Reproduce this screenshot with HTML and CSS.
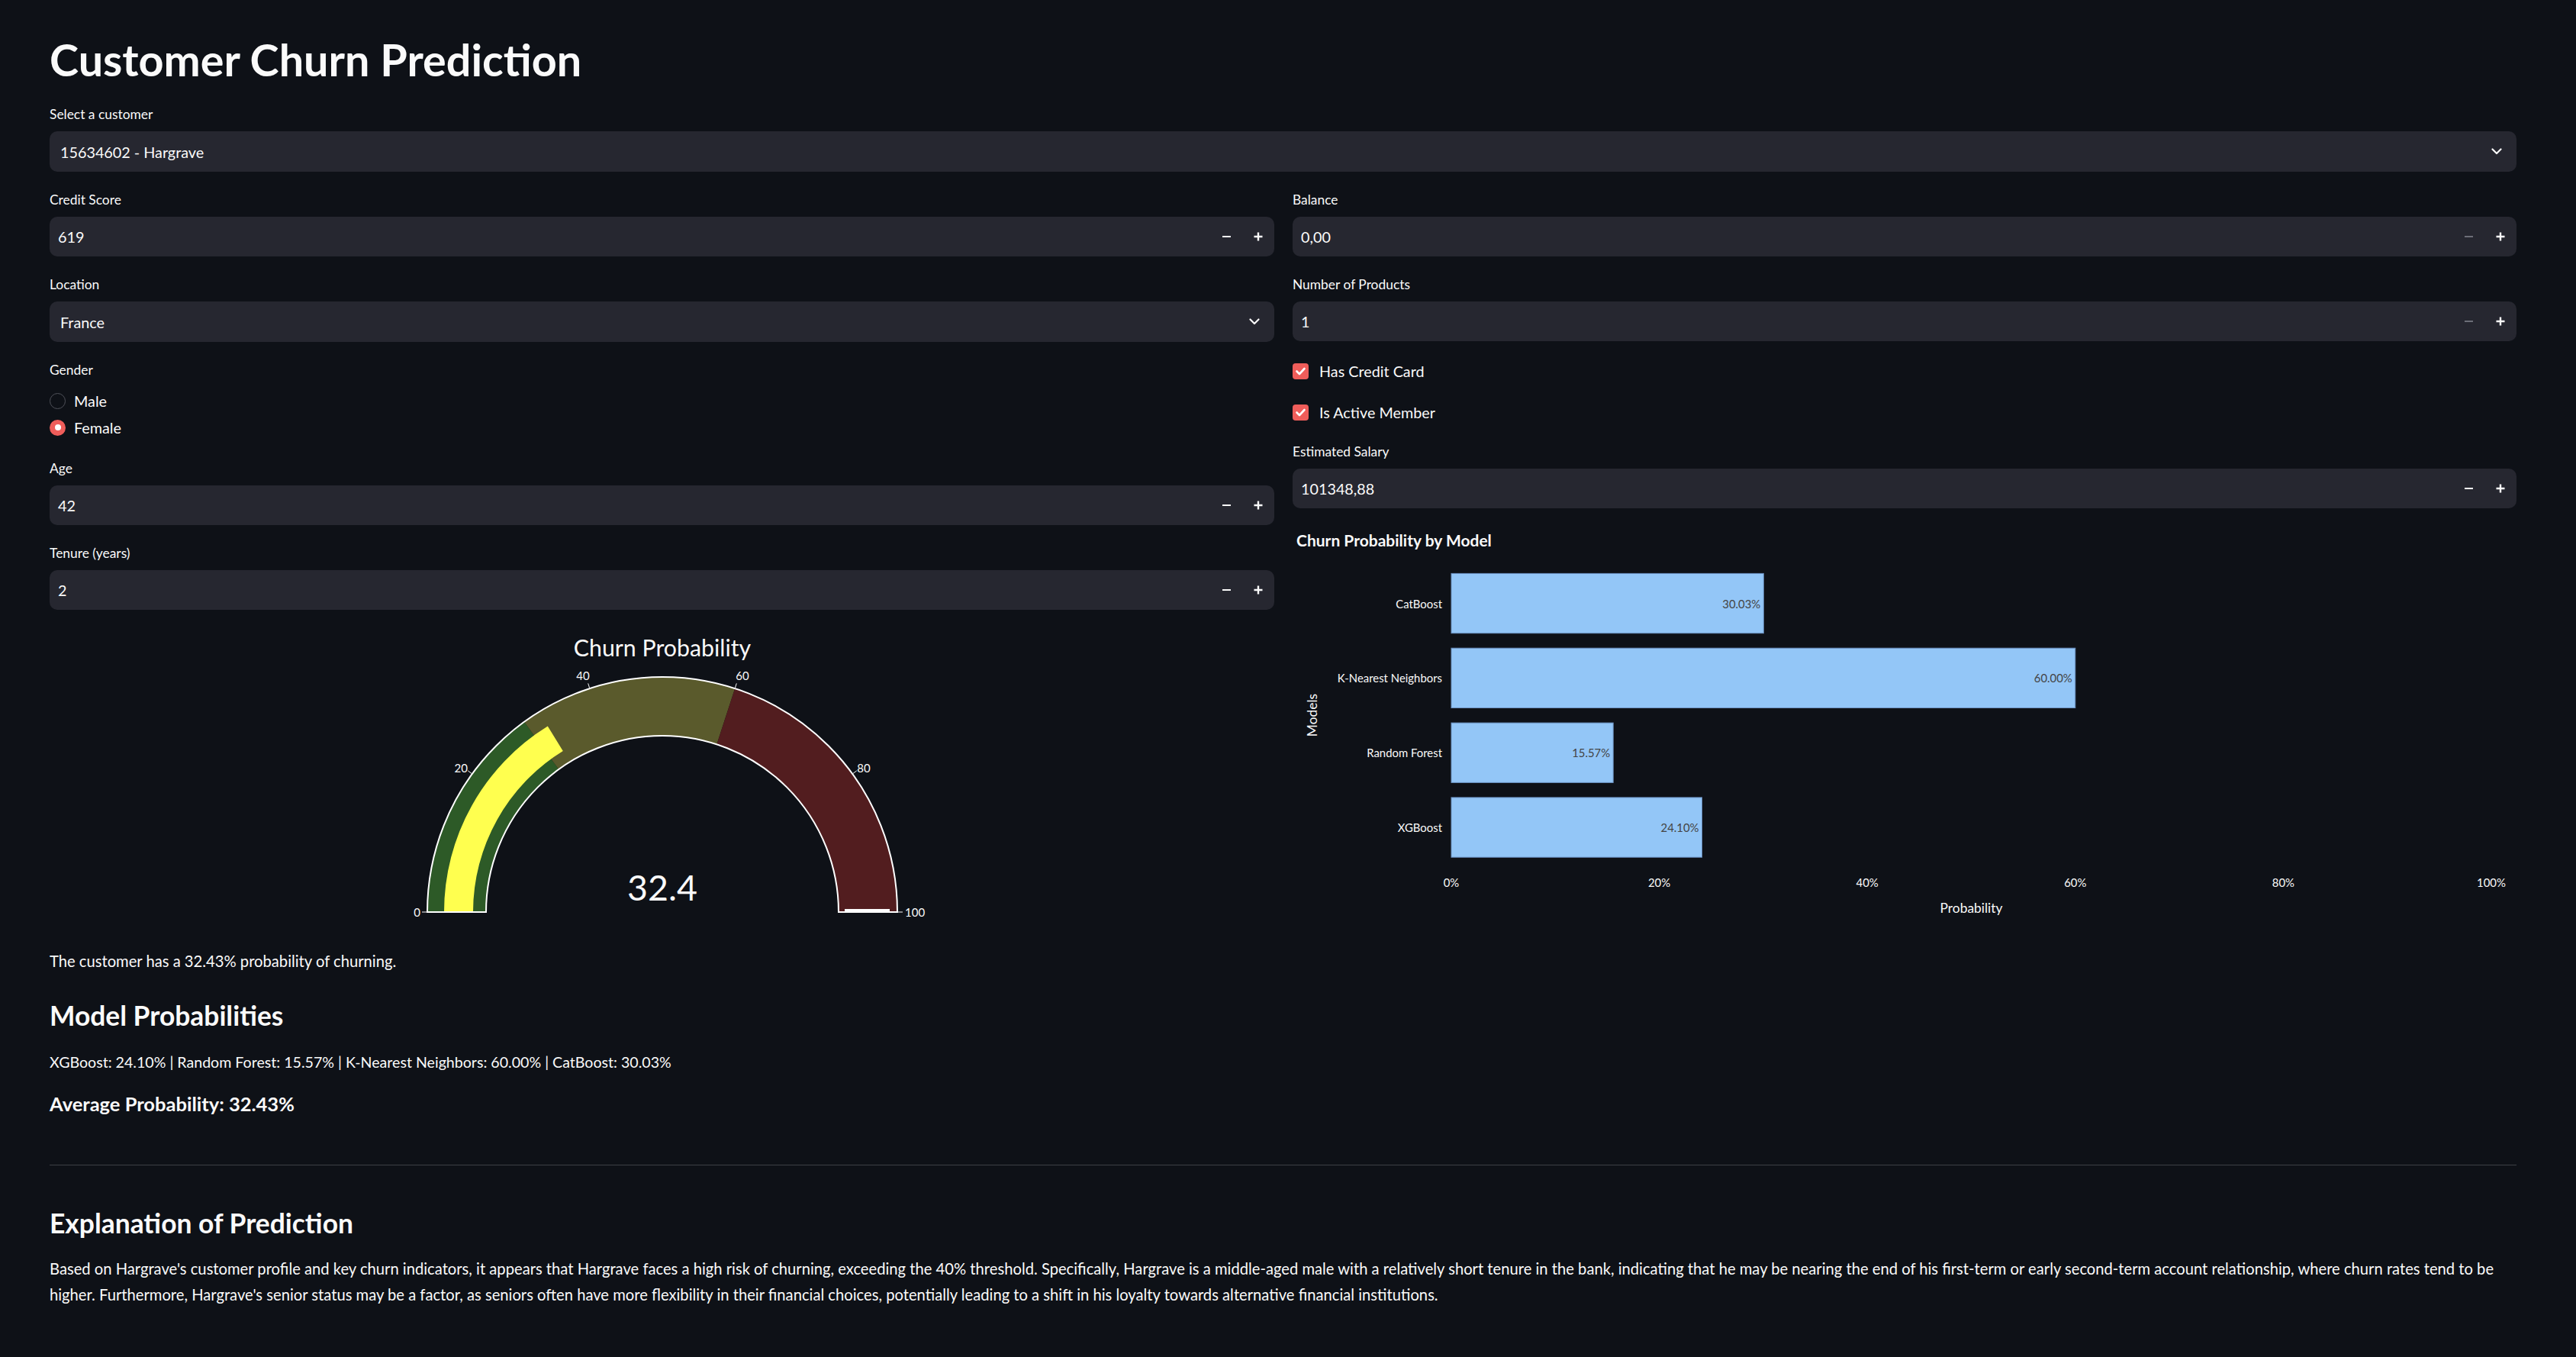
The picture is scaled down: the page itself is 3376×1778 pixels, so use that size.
FILE: index.html
```html
<!DOCTYPE html>
<html lang="en">
<head>
<meta charset="utf-8">
<title>Customer Churn Prediction</title>
<link rel="stylesheet" href="styles.css">
</head>
<body>
<main class="app">
  <h1 class="title">Customer Churn Prediction</h1>

  <div class="widget">
    <div class="label">Select a customer</div>
    <div class="select">
      <span>15634602 - Hargrave</span>
      <svg class="chevron" viewBox="0 0 14 9" width="14" height="9"><polyline points="1.5,1.5 7,7 12.5,1.5"/></svg>
    </div>
  </div>

  <div class="cols">
    <div class="col">
      <div class="widget">
        <div class="label">Credit Score</div>
        <div class="number">
          <span class="value">619</span>
          <span class="step"><span class="minus"></span></span>
          <span class="step"><svg class="plus" viewBox="0 0 12 12" width="12" height="12"><path d="M6 0.5V11.5M0.5 6H11.5"/></svg></span>
        </div>
      </div>
      <div class="widget">
        <div class="label">Location</div>
        <div class="select">
          <span>France</span>
          <svg class="chevron" viewBox="0 0 14 9" width="14" height="9"><polyline points="1.5,1.5 7,7 12.5,1.5"/></svg>
        </div>
      </div>
      <div class="widget">
        <div class="label">Gender</div>
        <div class="radio-group">
          <div class="radio-row"><span class="radio"></span><span>Male</span></div>
          <div class="radio-row"><span class="radio on"></span><span>Female</span></div>
        </div>
      </div>
      <div class="widget">
        <div class="label">Age</div>
        <div class="number">
          <span class="value">42</span>
          <span class="step"><span class="minus"></span></span>
          <span class="step"><svg class="plus" viewBox="0 0 12 12" width="12" height="12"><path d="M6 0.5V11.5M0.5 6H11.5"/></svg></span>
        </div>
      </div>
      <div class="widget">
        <div class="label">Tenure (years)</div>
        <div class="number">
          <span class="value">2</span>
          <span class="step"><span class="minus"></span></span>
          <span class="step"><svg class="plus" viewBox="0 0 12 12" width="12" height="12"><path d="M6 0.5V11.5M0.5 6H11.5"/></svg></span>
        </div>
      </div>

      <svg class="gauge" viewBox="0 0 1605 395" width="1605" height="395">
        <g transform="translate(803,372)">
          <text class="gauge-title" x="0" y="-335" text-anchor="middle">Churn Probability</text>
          <path fill="#2d5a27" d="M -308 0 A 308 308 0 0 1 -181.0 -249.2 L -135.8 -186.9 A 231 231 0 0 0 -231 0 Z"/>
          <path fill="#5a5a2c" d="M -181.0 -249.2 A 308 308 0 0 1 95.2 -292.9 L 71.4 -219.7 A 231 231 0 0 0 -135.8 -186.9 Z"/>
          <path fill="#521d1f" d="M 95.2 -292.9 A 308 308 0 0 1 308 0 L 231 0 A 231 231 0 0 0 71.4 -219.7 Z"/>
          <path fill="#ffff4f" d="M -286 0 A 286 286 0 0 1 -150.2 -243.4 L -130.2 -211.0 A 248 248 0 0 0 -248 0 Z"/>
          <path fill="none" stroke="#ffffff" stroke-width="2" d="M -308 0 A 308 308 0 0 1 308 0 L 231 0 A 231 231 0 0 0 -231 0 Z"/>
          <line x1="239" y1="-2" x2="298" y2="-2" stroke="#ffffff" stroke-width="4"/>
          <g stroke="#fafafa" stroke-width="1">
            <line x1="-309" y1="0" x2="-315" y2="0"/>
            <line x1="-250.0" y1="-181.6" x2="-254.8" y2="-185.2"/>
            <line x1="-95.5" y1="-293.9" x2="-97.3" y2="-299.6"/>
            <line x1="95.5" y1="-293.9" x2="97.3" y2="-299.6"/>
            <line x1="250.0" y1="-181.6" x2="254.8" y2="-185.2"/>
            <line x1="309" y1="0" x2="315" y2="0"/>
          </g>
          <g class="gauge-tick">
            <text x="-317" y="0" text-anchor="end" dominant-baseline="central">0</text>
            <text x="-263.7" y="-189" text-anchor="middle" dominant-baseline="central">20</text>
            <text x="-104" y="-310" text-anchor="middle" dominant-baseline="central">40</text>
            <text x="105" y="-310" text-anchor="middle" dominant-baseline="central">60</text>
            <text x="264" y="-189" text-anchor="middle" dominant-baseline="central">80</text>
            <text x="318" y="0" text-anchor="start" dominant-baseline="central">100</text>
          </g>
          <text class="gauge-value" x="0" y="-15" text-anchor="middle">32.4</text>
        </g>
      </svg>
    </div>

    <div class="col">
      <div class="widget">
        <div class="label">Balance</div>
        <div class="number">
          <span class="value">0,00</span>
          <span class="step"><span class="minus off"></span></span>
          <span class="step"><svg class="plus" viewBox="0 0 12 12" width="12" height="12"><path d="M6 0.5V11.5M0.5 6H11.5"/></svg></span>
        </div>
      </div>
      <div class="widget">
        <div class="label">Number of Products</div>
        <div class="number">
          <span class="value">1</span>
          <span class="step"><span class="minus off"></span></span>
          <span class="step"><svg class="plus" viewBox="0 0 12 12" width="12" height="12"><path d="M6 0.5V11.5M0.5 6H11.5"/></svg></span>
        </div>
      </div>
      <div class="check-row">
        <span class="checkbox"><svg viewBox="0 0 21 21" width="21" height="21"><polyline points="5.5,10.5 9,14 15.5,7"/></svg></span>
        <span>Has Credit Card</span>
      </div>
      <div class="check-row">
        <span class="checkbox"><svg viewBox="0 0 21 21" width="21" height="21"><polyline points="5.5,10.5 9,14 15.5,7"/></svg></span>
        <span>Is Active Member</span>
      </div>
      <div class="widget">
        <div class="label">Estimated Salary</div>
        <div class="number">
          <span class="value">101348,88</span>
          <span class="step"><span class="minus"></span></span>
          <span class="step"><svg class="plus" viewBox="0 0 12 12" width="12" height="12"><path d="M6 0.5V11.5M0.5 6H11.5"/></svg></span>
        </div>
      </div>

      <svg class="bar-chart" viewBox="0 0 1604 527" width="1604" height="527">
        <text class="chart-title" x="5" y="25.7">Churn Probability by Model</text>
        <g class="bars">
          <rect x="208" y="61.4" width="409.3" height="78.3"/>
          <rect x="208" y="159.2" width="817.8" height="78.3"/>
          <rect x="208" y="257.1" width="212.2" height="78.3"/>
          <rect x="208" y="354.9" width="328.5" height="78.3"/>
        </g>
        <g class="bar-values" text-anchor="end" dominant-baseline="central">
          <text x="613.3" y="100.5">30.03%</text>
          <text x="1021.8" y="198.4">60.00%</text>
          <text x="416.2" y="296.2">15.57%</text>
          <text x="532.5" y="394.0">24.10%</text>
        </g>
        <g class="axis-text" text-anchor="end" dominant-baseline="central">
          <text x="196" y="100.5">CatBoost</text>
          <text x="196" y="198.4">K-Nearest Neighbors</text>
          <text x="196" y="296.2">Random Forest</text>
          <text x="196" y="394.0">XGBoost</text>
        </g>
        <g class="axis-text" text-anchor="middle" dominant-baseline="central">
          <text x="208" y="466">0%</text>
          <text x="480.6" y="466">20%</text>
          <text x="753.2" y="466">40%</text>
          <text x="1025.8" y="466">60%</text>
          <text x="1298.4" y="466">80%</text>
          <text x="1571" y="466">100%</text>
        </g>
        <text class="axis-title" x="889.5" y="499" text-anchor="middle" dominant-baseline="central">Probability</text>
        <text class="axis-title" x="25" y="247" text-anchor="middle" dominant-baseline="central" transform="rotate(-90 25 247)">Models</text>
      </svg>
    </div>
  </div>

  <p class="text first">The customer has a 32.43% probability of churning.</p>
  <h3 class="h3">Model Probabilities</h3>
  <p class="text probs">XGBoost: 24.10% | Random Forest: 15.57% | K-Nearest Neighbors: 60.00% | CatBoost: 30.03%</p>
  <h4 class="h4">Average Probability: 32.43%</h4>
  <hr class="divider">
  <h3 class="h3 explain-title">Explanation of Prediction</h3>
  <p class="text explain">Based on Hargrave's customer profile and key churn indicators, it appears that Hargrave faces a high risk of churning, exceeding the 40% threshold. Specifically, Hargrave is a middle-aged male with a relatively short tenure in the bank, indicating that he may be nearing the end of his first-term or early second-term account relationship, where churn rates tend to be higher. Furthermore, Hargrave's senior status may be a factor, as seniors often have more flexibility in their financial choices, potentially leading to a shift in his loyalty towards alternative financial institutions.</p>
</main>
</body>
</html>
```

FILE: styles.css
```css
html, body {
  margin: 0;
  padding: 0;
  background: #0e1117;
}

body {
  color: #fafafa;
  font-family: Lato, "Noto Sans", sans-serif;
}

.app {
  width: 3233px;
  padding: 44px 0 60px 65px;
}

.title {
  margin: 0 0 25px;
  font-size: 57.5px;
  line-height: 68px;
  font-weight: 700;
}

.widget {
  display: flex;
  flex-direction: column;
}

.label {
  height: 26px;
  margin-bottom: 9px;
  font-size: 17.4px;
  line-height: 26px;
}

.select {
  height: 53px;
  box-sizing: border-box;
  padding: 0 19px 0 14px;
  display: flex;
  align-items: center;
  justify-content: space-between;
  background: #262730;
  border-radius: 10px;
  font-size: 19.8px;
}

.chevron polyline {
  fill: none;
  stroke: #fafafa;
  stroke-width: 2.2;
  stroke-linecap: round;
  stroke-linejoin: round;
}

.number {
  height: 52px;
  box-sizing: border-box;
  padding-left: 11px;
  display: flex;
  align-items: center;
  background: #262730;
  border-radius: 10px;
  font-size: 19.8px;
}

.number .value {
  flex: 1;
}

.step {
  width: 42px;
  height: 100%;
  display: flex;
  align-items: center;
  justify-content: center;
}

.minus {
  width: 11px;
  height: 2px;
  background: #fafafa;
}

.minus.off {
  background: #6c6e78;
}

.plus path {
  stroke: #fafafa;
  stroke-width: 2.4;
  fill: none;
}

.cols {
  margin-top: 24px;
  display: grid;
  grid-template-columns: 1fr 1fr;
  column-gap: 24px;
}

.col {
  display: flex;
  flex-direction: column;
  gap: 24px;
}

.radio-group {
  padding-top: 1px;
  display: flex;
  flex-direction: column;
  gap: 1px;
}

.radio-row {
  height: 34px;
  display: flex;
  align-items: center;
  gap: 11px;
  font-size: 19.8px;
}

.radio {
  width: 21px;
  height: 21px;
  box-sizing: border-box;
  border-radius: 50%;
  border: 1px solid #50525a;
  background: #0e1117;
  display: flex;
  align-items: center;
  justify-content: center;
}

.radio.on {
  border: none;
  background: #ef5d5a;
}

.radio.on::after {
  content: "";
  width: 8px;
  height: 8px;
  border-radius: 50%;
  background: #ffffff;
}

.check-row {
  height: 30px;
  display: flex;
  align-items: center;
  gap: 14px;
  font-size: 19.8px;
}

.checkbox {
  width: 21px;
  height: 21px;
  border-radius: 4px;
  background: #ef5d5a;
  display: flex;
}

.checkbox polyline {
  fill: none;
  stroke: #ffffff;
  stroke-width: 2.6;
  stroke-linecap: round;
  stroke-linejoin: round;
}

.gauge,
.bar-chart {
  display: block;
  font-family: Lato, "Noto Sans", sans-serif;
}

.gauge-title {
  fill: #fafafa;
  font-size: 30.3px;
}

.gauge-tick {
  fill: #fafafa;
  font-size: 15px;
}

.gauge-value {
  fill: #fafafa;
  font-size: 46.5px;
}

.chart-title {
  fill: #fafafa;
  font-size: 21px;
  font-weight: 700;
}

.bars rect {
  fill: #93c6f7;
  stroke: #6a8fbf;
  stroke-width: 1;
}

.bar-values {
  fill: #444444;
  font-size: 14.9px;
}

.axis-text {
  fill: #fafafa;
  font-size: 14.9px;
}

.axis-title {
  fill: #fafafa;
  font-size: 17.4px;
}

.text {
  margin: 0;
  font-size: 20.2px;
  line-height: 34px;
}

.text.first {
  margin-top: 24px;
}

.h3 {
  margin: 34px 0 0;
  font-size: 35.4px;
  line-height: 42px;
  font-weight: 700;
}

.text.probs {
  margin-top: 23px;
  font-size: 19.6px;
}

.h4 {
  margin: 22px 0 0;
  font-size: 25.5px;
  line-height: 30px;
  font-weight: 700;
}

.divider {
  margin: 65px 0 0;
  height: 1px;
  border: 0;
  background: #3d4044;
}

.h3.explain-title {
  margin-top: 55px;
}

.text.explain {
  margin-top: 22px;
  line-height: 33.5px;
}
```
